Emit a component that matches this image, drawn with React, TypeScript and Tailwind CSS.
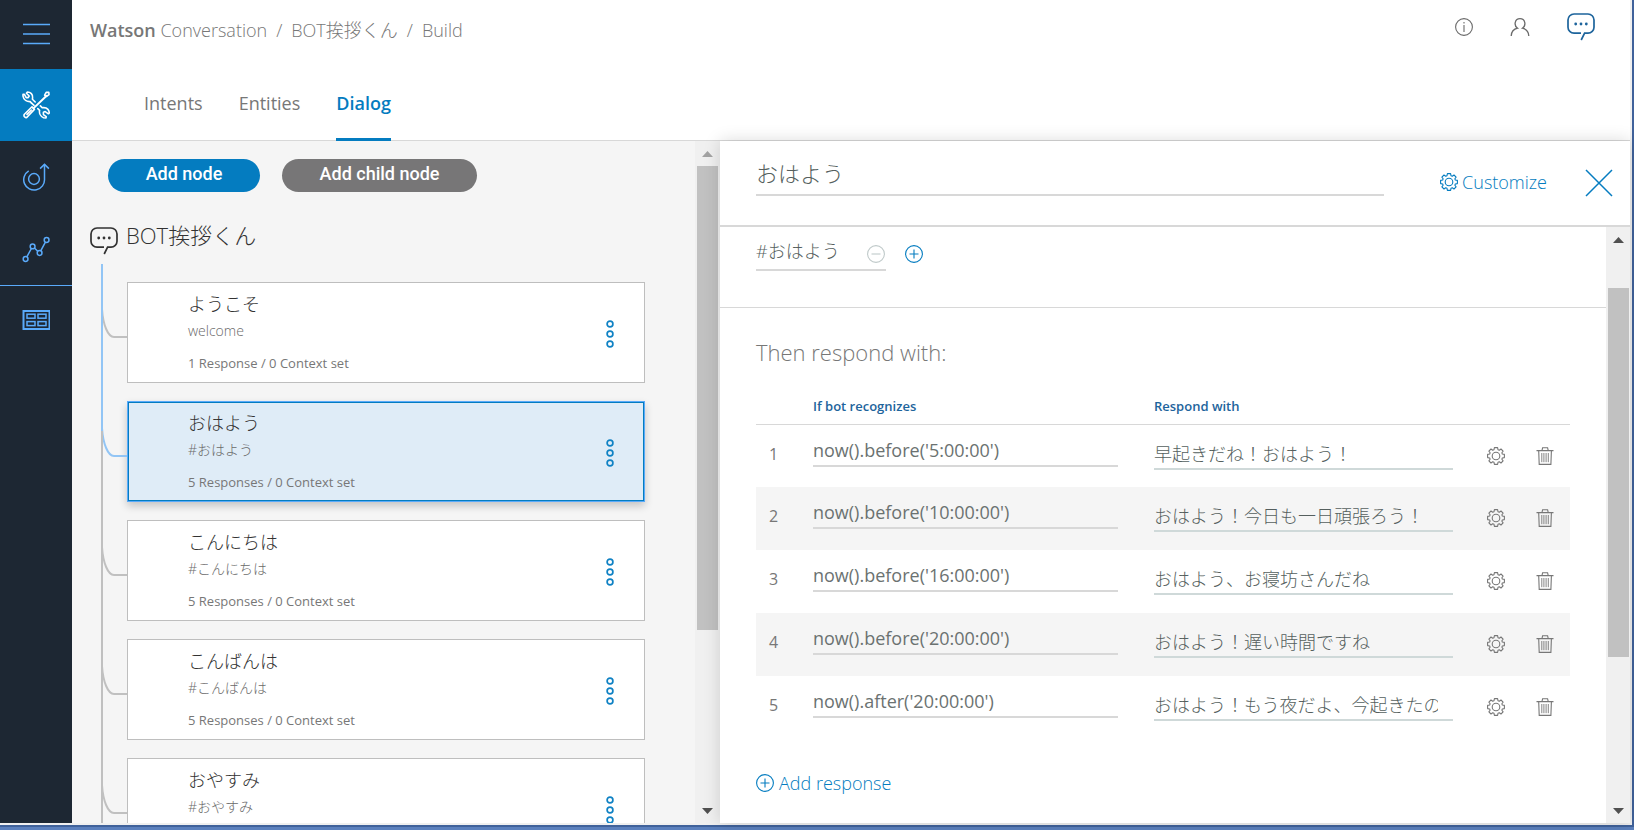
import { useState } from "react";

interface DialogNode {
  title: string;
  condition: string;
  summary?: string;
}

interface ResponseRow {
  id: number;
  condition: string;
  response: string;
}

const NODES: DialogNode[] = [
  { title: "ようこそ", condition: "welcome", summary: "1 Response / 0 Context set" },
  { title: "おはよう", condition: "#おはよう", summary: "5 Responses / 0 Context set" },
  { title: "こんにちは", condition: "#こんにちは", summary: "5 Responses / 0 Context set" },
  { title: "こんばんは", condition: "#こんばんは", summary: "5 Responses / 0 Context set" },
  { title: "おやすみ", condition: "#おやすみ" },
];

const RESPONSES: ResponseRow[] = [
  { id: 1, condition: "now().before('5:00:00')", response: "早起きだね！おはよう！" },
  { id: 2, condition: "now().before('10:00:00')", response: "おはよう！今日も一日頑張ろう！" },
  { id: 3, condition: "now().before('16:00:00')", response: "おはよう、お寝坊さんだね" },
  { id: 4, condition: "now().before('20:00:00')", response: "おはよう！遅い時間ですね" },
  { id: 5, condition: "now().after('20:00:00')", response: "おはよう！もう夜だよ、今起きたの？" },
];

function ToolsIcon() {
  return (
    <svg width="28" height="28" viewBox="0 0 28 28" fill="none" stroke="#fff" strokeWidth="1.6" strokeLinejoin="round" strokeLinecap="round">
      <path d="M9.6 12.2 L12 14.4 M15.8 17.6 L17.6 19.3 C17 22.3 18.6 25.6 21.6 26.8 L24 27 L24.2 25.6 L21.4 23.6 L21.4 21.2 L23.2 20.6 L26.4 22.8 L27.2 22.2 C27.4 19.4 25.4 16.6 21.8 16.6 L20.4 16.8 L18.4 14.9" />
      <path d="M9.6 12.2 L8.2 10.6 C5 10.8 1.6 9 1 5.2 L1 3.4 L2.4 3.4 L4.2 6.6 L6.2 6.6 L7.2 5 L4.4 2.2 L5.4 1 C8.6 1 11 3.4 10.6 6.8 L10.4 8.2 L13.2 11" />
      <path d="M24.6 4.8 L11.4 17.4" strokeWidth="2" />
      <path d="M22.6 4.2 L24.2 1.4 L26.8 1.2 L27 3.6 L24.6 5.4 Z" />
      <path d="M10 15.8 L2.4 23.2 C1.2 25 3 27.4 5 26.2 L12.4 18.4 Z M9.4 19 L5 23.4" />
    </svg>
  );
}

function ImproveIcon() {
  return (
    <svg width="28" height="28" viewBox="0 0 28 28" fill="none" stroke="#5aaafa" strokeWidth="1.5">
      <circle cx="12" cy="16" r="5.4" />
      <path d="M6.7 7.8 A10.4 10.4 0 1 0 22.5 16 V1.6" />
      <path d="M18.1 5.6 L22.5 1.4 L26.9 5.6" />
    </svg>
  );
}

function AnalyticsIcon() {
  return (
    <svg width="28" height="28" viewBox="0 0 28 28" fill="none" stroke="#5aaafa" strokeWidth="1.5">
      <circle cx="3.6" cy="24" r="2.4" />
      <circle cx="10.6" cy="11.4" r="2.4" />
      <circle cx="17.6" cy="18" r="2.4" />
      <circle cx="24.6" cy="5" r="2.4" />
      <path d="M4.8 21.9 L9.4 13.5 M12.4 13 L15.8 16.3 M18.7 15.9 L23.4 7.1" />
    </svg>
  );
}

function GridIcon() {
  return (
    <svg width="28" height="20" viewBox="0 0 28 20" fill="none" stroke="#5aaafa" strokeWidth="1.5">
      <rect x="1.5" y="1" width="26" height="18" strokeWidth="2" />
      <rect x="5" y="4.2" width="8" height="4" />
      <rect x="16" y="4.2" width="8" height="4" />
      <rect x="5" y="11.6" width="8" height="4" />
      <rect x="16" y="11.6" width="8" height="4" />
    </svg>
  );
}

function ChatIcon() {
  return (
    <svg width="28" height="28" viewBox="0 0 28 28" fill="none" stroke="currentColor" strokeWidth="1.7">
      <path d="M14 20.2 H7 A6 6 0 0 1 1 14.2 V7 A6 6 0 0 1 7 1 H21 A6 6 0 0 1 27 7 V14.2 A6 6 0 0 1 21 20.2 H17.6 L14.2 27" />
      <g fill="currentColor" stroke="none">
        <circle cx="8.7" cy="11" r="1.4" />
        <circle cx="14" cy="11" r="1.4" />
        <circle cx="19.3" cy="11" r="1.4" />
      </g>
    </svg>
  );
}

function GearIcon() {
  return (
    <svg width="18" height="18" viewBox="0 0 18 18" fill="none" stroke="currentColor" strokeWidth="1.1" strokeLinejoin="round">
      <circle cx="9" cy="9" r="3.8" />
      <path d="M7.4 0.6 H10.6 L11 2.7 L12.3 3.2 L14 2 L16.1 4.1 L14.9 5.8 L15.3 7 L17.4 7.4 V10.6 L15.3 11 L14.9 12.2 L16.1 13.9 L14 16 L12.3 14.8 L11 15.3 L10.6 17.4 H7.4 L7 15.3 L5.7 14.8 L4 16 L1.9 13.9 L3.1 12.2 L2.7 11 L0.6 10.6 V7.4 L2.7 7 L3.1 5.8 L1.9 4.1 L4 2 L5.7 3.2 L7 2.7 Z" />
    </svg>
  );
}

function TrashIcon() {
  return (
    <svg width="18" height="18" viewBox="0 0 18 18" fill="none" stroke="currentColor" strokeWidth="1.1">
      <path d="M0.5 3.6 H17.5 M6 3.4 L6.6 0.8 H11.6 L12.2 3.4 M2.7 3.6 L3.2 17.4 H14.9 L15.4 3.6" />
      <path d="M5.8 6 V15.2 M7.9 6 V15.2 M10.1 6 V15.2 M12.3 6 V15.2" strokeWidth="0.9" />
    </svg>
  );
}

function CircleIcon({ plus }: { plus?: boolean }) {
  return (
    <svg width="18" height="18" viewBox="0 0 18 18" fill="none" stroke="currentColor" strokeWidth="1.1">
      <circle cx="9" cy="9" r="8.4" />
      <path d={plus ? "M4.5 9 H13.5 M9 4.5 V13.5" : "M4.5 9 H13.5"} />
    </svg>
  );
}

function DotsIcon() {
  return (
    <svg width="8" height="28" viewBox="0 0 8 28" fill="none" stroke="#1082c4" strokeWidth="1.7">
      <circle cx="4" cy="4" r="2.9" />
      <circle cx="4" cy="14" r="2.9" />
      <circle cx="4" cy="24" r="2.9" />
    </svg>
  );
}

function Arrow({ down, muted }: { down?: boolean; muted?: boolean }) {
  return (
    <svg width="11" height="6" viewBox="0 0 11 6" className={muted ? "text-[#a3a3a3]" : "text-[#505050]"}>
      <path d={down ? "M0 0 H11 L5.5 6 Z" : "M0 6 H11 L5.5 0 Z"} fill="currentColor" />
    </svg>
  );
}

// branch line that leads from the tree trunk into one node
function Connector({ index, selected }: { index: number; selected: number }) {
  const trunk = index < selected ? "#92c5f5" : "#c0c0c0";
  return (
    <svg width="26" height="120" viewBox="0 0 26 120" fill="none" strokeWidth="2" className="absolute -top-[19px] -left-[27px]">
      <path d="M1 45 C2 61 7 73 13 73 H26" stroke={index === selected ? "#92c5f5" : "#c0c0c0"} />
      <path d="M1 0 V120" stroke={trunk} />
      {index === selected && <path d="M1 0 V48" stroke="#92c5f5" />}
    </svg>
  );
}

function NodeCard({ node, index, selected, onSelect }: { node: DialogNode; index: number; selected: number; onSelect: () => void }) {
  const active = index === selected;
  return (
    <li
      onClick={onSelect}
      className={
        active
          ? "relative flex h-[101px] items-start justify-between border border-[#5aaafa] bg-[#dfecf7] pt-[9px] pr-[30px] pl-[60px] shadow-[inset_0_0_0_1px_#047cc0,0_4px_8px_rgba(0,0,0,0.2)]"
          : "relative flex h-[101px] items-start justify-between border border-[#bebebe] bg-white pt-[9px] pr-[30px] pl-[60px]"
      }
    >
      <Connector index={index} selected={selected} />
      <div>
        <h3 className="text-lg/6 text-[#323232]">{node.title}</h3>
        <p className="mt-[5px] text-sm/5 text-[#6a6a6a]">{node.condition}</p>
        {node.summary && <p className="mt-3 text-[13px]/5 font-normal text-[#777]">{node.summary}</p>}
      </div>
      <button type="button" aria-label="Node menu" className="pt-7">
        <DotsIcon />
      </button>
    </li>
  );
}

export default function App() {
  const [selected, setSelected] = useState(1);
  const [name, setName] = useState("おはよう");
  const [trigger, setTrigger] = useState("#おはよう");
  const [rows, setRows] = useState(RESPONSES);

  function update(id: number, patch: Partial<ResponseRow>) {
    setRows(rows.map((r) => (r.id === id ? { ...r, ...patch } : r)));
  }

  return (
    <div className="h-screen overflow-hidden bg-[#5b80bd] pr-[2px] pb-[5px] font-['Open_Sans','Noto_Sans_CJK_JP',sans-serif] font-light text-[#777]">
      <div className="flex h-full border-r-2 border-b-2 border-[#f0f0f0] bg-white shadow-[0_0_0_2px_#40629b]">
        <nav className="flex w-18 shrink-0 flex-col bg-[#1d2733]">
          <button type="button" aria-label="Menu" className="flex h-[69px] items-center justify-center pb-[2px]">
            <svg width="28" height="22" viewBox="0 0 28 22" stroke="#5aaafa" strokeWidth="1.6">
              <path d="M1 1.5 H28 M1 11 H28 M1 20.5 H28" />
            </svg>
          </button>
          <a href="#build" aria-label="Build" className="flex h-18 items-center justify-center bg-[#047cc0]"><ToolsIcon /></a>
          <a href="#improve" aria-label="Improve" className="flex h-18 items-center justify-center"><ImproveIcon /></a>
          <a href="#analytics" aria-label="Analytics" className="flex h-18 items-center justify-center"><AnalyticsIcon /></a>
          <a href="#workspaces" aria-label="Workspaces" className="flex h-17 items-center justify-center border-t border-[#5aaafa]"><GridIcon /></a>
        </nav>

        <div className="flex min-w-0 flex-1 flex-col">
          <header className="flex h-[141px] shrink-0 flex-col justify-between border-b border-[#d8d8d8]">
            <div className="flex items-start justify-between pr-[35px] pl-[18px]">
              <nav aria-label="Breadcrumb" className="flex gap-[9px] pt-[18px] text-lg/6">
                <a href="#home"><b className="font-semibold">Watson</b> Conversation</a>
                <span>/</span>
                <a href="#workspace">BOT挨拶くん</a>
                <span>/</span>
                <span>Build</span>
              </nav>
              <div className="flex items-center gap-[37px] pt-[13px]">
                <button type="button" aria-label="Info" className="text-[#6a6a6a]">
                  <svg width="18" height="18" viewBox="0 0 18 18" fill="none" stroke="currentColor" strokeWidth="1.1">
                    <circle cx="9" cy="9" r="8.4" />
                    <path d="M9 7 V14 M9 4 V5.4" />
                  </svg>
                </button>
                <button type="button" aria-label="Account" className="text-[#6a6a6a]">
                  <svg width="20" height="18" viewBox="0 0 20 18" fill="none" stroke="currentColor" strokeWidth="1.3">
                    <path d="M1.2 18 C1.4 13.6 4 11 7.6 10.2 C3.4 7.4 4.8 0.7 10 0.7 C15.2 0.7 16.6 7.4 12.4 10.2 C16 11 18.6 13.6 18.8 18" />
                  </svg>
                </button>
                <button type="button" aria-label="Try it out" className="text-[#1d649c]"><ChatIcon /></button>
              </div>
            </div>
            <nav aria-label="Sections" className="flex gap-9 pl-18 text-lg/6">
              <a href="#intents" className="pb-[25px] font-normal">Intents</a>
              <a href="#entities" className="pb-[25px] font-normal">Entities</a>
              <a href="#dialog" className="-mb-px border-b-[3px] border-[#047cc0] pb-[23px] font-semibold text-[#047cc0]">Dialog</a>
            </nav>
          </header>

          <div className="flex min-h-0 flex-1">
            <section className="flex w-[648px] shrink-0 bg-[#f5f5f5]">
              <div className="flex-1 overflow-hidden pt-[18px] pr-[50px] pl-[18px]">
                <div className="flex gap-[22px] pl-[18px] font-['Roboto',sans-serif] text-lg/6 font-medium text-white">
                  <button type="button" className="h-[33px] w-[152px] rounded-full bg-[#047cc0] pb-1">Add node</button>
                  <button type="button" className="h-[33px] w-[195px] rounded-full bg-[#777677] pb-1">Add child node</button>
                </div>
                <div className="mt-[27px] mb-[27px] flex items-start gap-2 text-[#323232]">
                  <span className="pt-2"><ChatIcon /></span>
                  <h2 className="text-[22px]/8">BOT挨拶くん</h2>
                </div>
                <ol className="flex flex-col gap-[18px] pl-[37px]">
                  {NODES.map((node, i) => (
                    <NodeCard key={node.title} node={node} index={i} selected={selected} onSelect={() => setSelected(i)} />
                  ))}
                </ol>
              </div>
              <div className="flex w-[25px] flex-col items-center justify-between bg-[#f0f0f0] pt-[10px] pb-[9px]">
                <Arrow muted />
                <div className="mt-[9px] mb-auto h-[70%] w-[21px] bg-[#c1c1c1]" />
                <Arrow down />
              </div>
            </section>

            <section className="z-10 flex min-w-0 flex-1 flex-col bg-white shadow-[0_0_16px_rgba(0,0,0,0.15)]">
              <div className="flex h-[86px] shrink-0 items-center border-b-2 border-[#d8d8d8] pr-[17px] pl-9">
                <input
                  aria-label="Node name"
                  value={name}
                  onChange={(e) => setName(e.target.value)}
                  className="mb-4 h-[42px] min-w-0 flex-1 border-b-2 border-[#d8d8d8] pb-1 text-[22px]/8 text-[#555f5e] outline-none"
                />
                <button type="button" className="ml-14 flex items-center gap-1 pb-[2px] text-lg/6 text-[#047cc0]">
                  <GearIcon />
                  Customize
                </button>
                <button type="button" aria-label="Close" className="ml-[38px]">
                  <svg width="28" height="28" viewBox="0 0 28 28" stroke="#047cc0" strokeWidth="1.5">
                    <path d="M1 1 L27 27 M27 1 L1 27" />
                  </svg>
                </button>
              </div>

              <div className="flex min-h-0 flex-1">
                <div className="min-w-0 flex-1 overflow-hidden">
                  <div className="flex h-[81px] items-start gap-[19px] border-b border-[#d8d8d8] pl-9">
                    <div className="flex h-11 w-[130px] items-center border-b-2 border-[#d8d8d8]">
                      <input
                        aria-label="Condition"
                        value={trigger}
                        onChange={(e) => setTrigger(e.target.value)}
                        className="h-full w-[111px] pt-1 text-lg/6 text-[#555f5e] outline-none"
                      />
                      <button type="button" aria-label="Remove condition" className="pt-3 text-[#c0caca]"><CircleIcon /></button>
                    </div>
                    <button type="button" aria-label="Add condition" className="pt-[18px] text-[#047cc0]"><CircleIcon plus /></button>
                  </div>

                  <div className="pr-9 pl-9">
                    <h2 className="pt-7 text-[22px]/8 text-[#777]">Then respond with:</h2>
                    <table className="mt-[21px] w-full table-fixed border-collapse">
                      <colgroup>
                        <col className="w-[57px]" />
                        <col className="w-[341px]" />
                        <col />
                        <col className="w-[49px]" />
                        <col className="w-[34px]" />
                      </colgroup>
                      <thead>
                        <tr className="h-[35px] border-b border-[#d8d8d8] text-left text-[13px]/5 text-[#1d649c]">
                          <th />
                          <th className="font-semibold">If bot recognizes</th>
                          <th className="font-semibold">Respond with</th>
                          <th />
                          <th />
                        </tr>
                      </thead>
                      <tbody>
                        {rows.map((row) => (
                          <tr key={row.id} className="h-[63px] align-top even:bg-[#f5f5f5]">
                            <td className="pt-[17px] pl-[13px] text-base/6 font-normal">{row.id}</td>
                            <td className="pt-[10px] pr-9">
                              <input
                                aria-label={`Condition ${row.id}`}
                                value={row.condition}
                                onChange={(e) => update(row.id, { condition: e.target.value })}
                                className="block h-8 w-full border-b-2 border-[#d8d8d8] text-lg/6 font-normal text-[#6b7271] outline-none"
                              />
                            </td>
                            <td className="pt-[13px] pr-[34px]">
                              <div className="border-b-2 border-[#cfd9d9] pr-[15px]">
                                <input
                                  aria-label={`Response ${row.id}`}
                                  value={row.response}
                                  onChange={(e) => update(row.id, { response: e.target.value })}
                                  className="block h-[30px] w-full text-lg/6 text-[#555f5e] outline-none"
                                />
                              </div>
                            </td>
                            <td className="pt-[22px] text-[#777]">
                              <button type="button" aria-label="Edit response" className="block"><GearIcon /></button>
                            </td>
                            <td className="pt-[22px] text-[#777]">
                              <button type="button" aria-label="Delete response" className="block"><TrashIcon /></button>
                            </td>
                          </tr>
                        ))}
                      </tbody>
                    </table>
                    <button type="button" className="mt-8 flex items-center gap-[5px] text-lg/6 text-[#047cc0]">
                      <CircleIcon plus />
                      Add response
                    </button>
                  </div>
                </div>
                <div className="flex w-6 flex-col items-center justify-between bg-[#f0f0f0] pt-[10px] pb-[9px]">
                  <Arrow />
                  <div className="mt-[45px] mb-auto h-[64%] w-[21px] bg-[#c1c1c1]" />
                  <Arrow down />
                </div>
              </div>
            </section>
          </div>
        </div>
      </div>
    </div>
  );
}
